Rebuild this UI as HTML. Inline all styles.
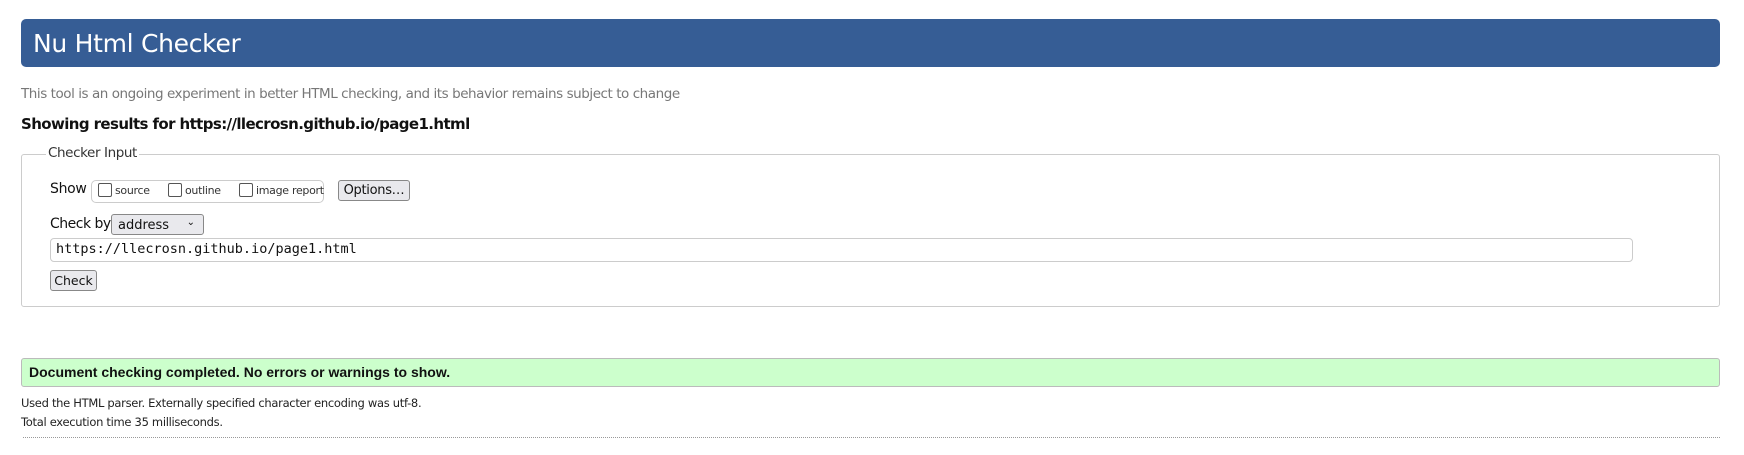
<!DOCTYPE html>
<html><head><style>
body{margin:0;width:1744px;height:455px;background:#fff;font-family:"DejaVu Sans","Liberation Sans",sans-serif;position:relative;overflow:hidden;color:#111}
.a{position:absolute;white-space:nowrap}
.cb{position:absolute;top:183px;width:12px;height:12px;border:1px solid #555;border-radius:2px;background:#fff}
.sm{position:absolute;top:184px;font-size:11px;color:#333;letter-spacing:-0.3px}
</style></head><body>
<div class="a" style="left:21px;top:19px;width:1699px;height:48px;background:#365d95;border-radius:5px"></div>
<div class="a" style="left:33px;top:27px;font-size:25px;color:#fff;line-height:34px;letter-spacing:-0.3px">Nu Html Checker</div>
<div class="a" style="left:21px;top:86px;font-size:13.5px;color:#777;letter-spacing:-0.45px">This tool is an ongoing experiment in better HTML checking, and its behavior remains subject to change</div>
<div class="a" style="left:21px;top:115px;font-size:15px;font-weight:bold;letter-spacing:-0.6px">Showing results for https://llecrosn.github.io/page1.html</div>
<div class="a" style="left:21px;top:154px;width:1697px;height:151px;border:1px solid #ccc;border-radius:3px"></div>
<div class="a" style="left:46px;top:145px;background:#fff;padding:0 2px;font-size:13.5px;color:#333;letter-spacing:-0.4px">Checker Input</div>
<div class="a" style="left:50px;top:181px;font-size:14px;letter-spacing:-0.3px">Show</div>
<div class="a" style="left:91px;top:180px;width:231px;height:21px;border:1px solid #ccc;border-radius:5px"></div>
<div class="cb" style="left:98px"></div><div class="sm" style="left:115px">source</div>
<div class="cb" style="left:168px"></div><div class="sm" style="left:185px">outline</div>
<div class="cb" style="left:239px"></div><div class="sm" style="left:256px">image report</div>
<div class="a" style="left:338px;top:180px;width:70px;height:19px;border:1px solid #888;border-radius:3px;background:#e9e9ed;font-size:13px;text-align:center;line-height:19px;letter-spacing:-0.3px">Options…</div>
<div class="a" style="left:50px;top:216px;font-size:14px;letter-spacing:-0.5px">Check by</div>
<div class="a" style="left:111px;top:214px;width:93px;height:21px;border:1px solid #888;border-radius:3px;background:#e9e9ed;font-size:13px;line-height:21px;padding-left:6px;box-sizing:border-box">address<span style="position:absolute;right:8px;top:-3px;font-size:10px">⌄</span></div>
<div class="a" style="left:50px;top:238px;width:1581px;height:22px;border:1px solid #ccc;border-radius:4px"></div>
<div class="a" style="left:56px;top:241px;font-family:'DejaVu Sans Mono','Liberation Mono',monospace;font-size:13.5px">https://llecrosn.github.io/page1.html</div>
<div class="a" style="left:50px;top:270px;width:45px;height:19px;border:1px solid #888;border-radius:3px;background:#e9e9ed;font-size:12.5px;text-align:center;line-height:19px">Check</div>
<div class="a" style="left:21px;top:358px;width:1697px;height:27px;background:#ccffcc;border:1px solid #bbb;border-radius:3px"></div>
<div class="a" style="left:29px;top:364px;font-family:'Liberation Sans',Arial,sans-serif;font-weight:bold;font-size:14px">Document checking completed. No errors or warnings to show.</div>
<div class="a" style="left:21px;top:396px;font-size:11.5px;color:#222;letter-spacing:-0.3px">Used the HTML parser. Externally specified character encoding was utf-8.</div>
<div class="a" style="left:21px;top:415px;font-size:11.5px;color:#222;letter-spacing:-0.3px">Total execution time 35 milliseconds.</div>
<div class="a" style="left:23px;top:437px;width:1697px;border-top:1px dotted #999"></div>
</body></html>
